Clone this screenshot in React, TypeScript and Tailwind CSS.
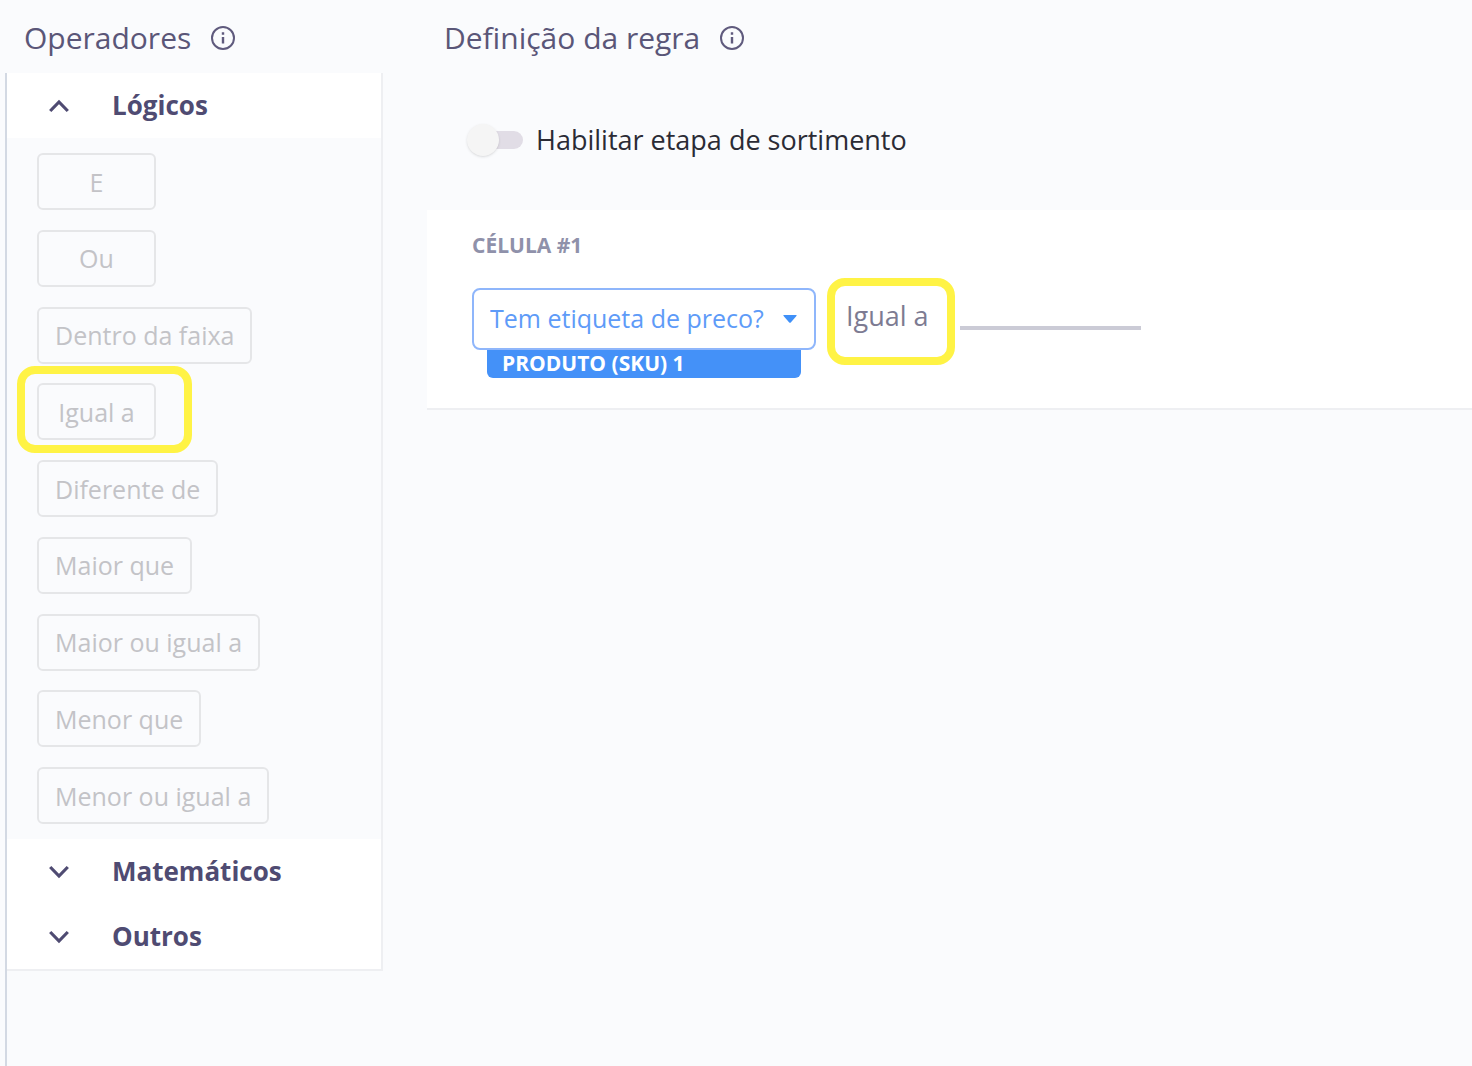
import { useState } from 'react';

const logicalOperators = [
  'E',
  'Ou',
  'Dentro da faixa',
  'Igual a',
  'Diferente de',
  'Maior que',
  'Maior ou igual a',
  'Menor que',
  'Menor ou igual a',
];

function InfoIcon() {
  return (
    <svg viewBox="0 0 24 24" className="size-6" fill="none" stroke="#5f5a7d" strokeWidth="2" aria-hidden="true">
      <circle cx="12" cy="12" r="11" />
      <path d="M12 11v6.500M12 6.300v2.400" strokeWidth="2.400" />
    </svg>
  );
}

function Chevron({ up }: { up?: boolean }) {
  return (
    <svg viewBox="0 0 20 14" className="h-3.5 w-5" fill="none" stroke="currentColor" strokeWidth="3.200" aria-hidden="true">
      <path d={up ? 'M1.200 12 10 3l8.800 9' : 'M1.200 2 10 11l8.800-9'} />
    </svg>
  );
}

function Title({ text }: { text: string }) {
  return (
    <div className="flex h-[73px] items-center gap-5 pt-0.5">
      <h2 className="text-[30px] leading-9 text-[#5a5678]">{text}</h2>
      <button type="button" aria-label={`Ajuda: ${text}`}>
        <InfoIcon />
      </button>
    </div>
  );
}

function SectionHeader({ label, open, onClick }: { label: string; open?: boolean; onClick?: () => void }) {
  return (
    <button
      type="button"
      onClick={onClick}
      aria-expanded={!!open}
      className="flex h-[65px] w-full items-center gap-[43px] bg-white pl-[42px] text-[#4f4b72]"
    >
      <Chevron up={open} />
      <span className="pb-0.5 text-[26px] leading-8 font-bold">{label}</span>
    </button>
  );
}

function Operator({ label }: { label: string }) {
  return (
    <div className="relative">
      <button
        type="button"
        className="h-[57px] min-w-[119px] rounded-md border-2 border-[#e5e6e8] px-4 text-[25px] leading-8 text-[#c3c3c7]"
      >
        {label}
      </button>
      {label === 'Igual a' && (
        <span className="pointer-events-none absolute -top-[17px] -left-5 h-[87px] w-[175px] rounded-[18px] border-8 border-[#fff345]" />
      )}
    </div>
  );
}

function Sidebar() {
  const [open, setOpen] = useState(true);
  return (
    <aside className="flex w-[383px] shrink-0 flex-col pl-[5px]">
      <div className="pl-[19px]">
        <Title text="Operadores" />
      </div>
      <div className="grow border-l-2 border-[#d3d9e3]">
        <div className="border-r-2 border-b-2 border-[#eeeff2]">
          <SectionHeader label="Lógicos" open={open} onClick={() => setOpen(!open)} />
          {open && (
            <div className="flex h-[701px] flex-col items-start justify-between py-[15px] pl-[30px]">
              {logicalOperators.map((label) => (
                <Operator key={label} label={label} />
              ))}
            </div>
          )}
          <SectionHeader label="Matemáticos" />
          <SectionHeader label="Outros" />
        </div>
      </div>
    </aside>
  );
}

function RuleCell() {
  return (
    <section className="h-[200px] border-b-2 border-[#eeeff2] bg-white pt-[21px] pl-[45px]">
      <h3 className="text-[21px] leading-7 font-bold text-[#8f91aa]">CÉLULA #1</h3>
      <div className="mt-[29px] flex items-start">
        <div className="w-[344px]">
          <div className="relative">
            <select
              aria-label="Atributo"
              className="h-[62px] w-full appearance-none rounded-lg border-2 border-[#8fb6fb] bg-white pb-0.5 pl-4 text-[25px] leading-8 font-medium text-[#5e9bf8]"
            >
              <option>Tem etiqueta de preco?</option>
            </select>
            <svg viewBox="0 0 14 8" className="pointer-events-none absolute top-[27px] right-[19px] h-2 w-3.5" aria-hidden="true">
              <path d="M1 0h12q1.200 0 .4 1L8 7.300q-1 1-2 0L.6 1Q-.2 0 1 0z" fill="#3f90f8" />
            </svg>
          </div>
          <div className="mx-[15px] h-7 rounded-b-md bg-[#4491f8] pl-[15px] text-[21px] leading-[26px] font-bold text-white">
            PRODUTO (SKU) 1
          </div>
        </div>
        <div className="relative ml-[30px] pt-3">
          <span className="text-[27px] leading-8 text-[#7d7b92]">Igual a</span>
          <span className="pointer-events-none absolute -top-2.5 -left-[19px] h-[87px] w-[128px] rounded-[18px] border-8 border-[#fff345]" />
        </div>
        <input
          type="text"
          aria-label="Valor"
          className="ml-[31px] h-[42px] w-[181px] border-b-4 border-[#cbcbd6] bg-transparent text-[25px] outline-none"
        />
      </div>
    </section>
  );
}

export default function App() {
  return (
    <main className="flex min-h-screen bg-[#fafbfd] font-['Open_Sans',sans-serif]">
      <Sidebar />
      <div className="ml-11 min-w-0 grow">
        <div className="pl-[17px]">
          <Title text="Definição da regra" />
        </div>
        <label className="mt-[51px] mb-[54px] ml-10 flex h-8 items-center gap-3">
          <span className="relative flex h-8 w-[57px] items-center">
            <input type="checkbox" role="switch" className="peer absolute inset-0 z-10 cursor-pointer opacity-0" />
            <span className="ml-1 h-[18px] w-[52px] rounded-full bg-[#e1dde6]" />
            <span className="absolute left-0 size-8 rounded-full bg-[#f5f5f5] shadow-sm peer-checked:left-[25px]" />
          </span>
          <span className="text-[27px] leading-8 text-[#2b2b35]">Habilitar etapa de sortimento</span>
        </label>
        <RuleCell />
      </div>
    </main>
  );
}
